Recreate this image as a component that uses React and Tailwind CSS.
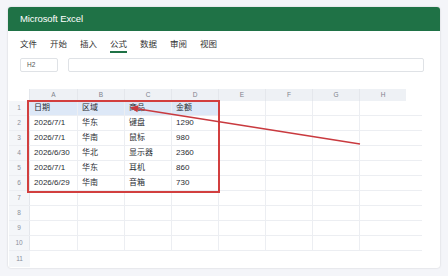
import React from "react";

const cols = ["A", "B", "C", "D", "E", "F", "G", "H"];
const data = [
  ["日期", "区域", "商品", "金额"],
  ["2026/7/1", "华东", "键盘", "1290"],
  ["2026/7/1", "华南", "鼠标", "980"],
  ["2026/6/30", "华北", "显示器", "2360"],
  ["2026/7/1", "华东", "耳机", "860"],
  ["2026/6/29", "华南", "音箱", "730"],
];
const menu = ["文件", "开始", "插入", "公式", "数据", "审阅", "视图"];
const font = { fontFamily: '"Liberation Sans", "Noto Sans CJK SC", sans-serif' };

export default function App() {
  const rows = [];
  for (let r = 1; r <= 10; r++) {
    const d = data[r - 1] || [];
    rows.push(
      <div key={r} className={`flex h-[15px] border-b border-[#eceef2] ${r === 1 ? "" : ""}`}>
        <div className="w-[21px] shrink-0 border-r border-[#e4e7ec] bg-[#f4f6f9] flex items-center justify-center text-[6.5px] text-[#8a8f99]">{r}</div>
        {cols.map((c, i) => (
          <div
            key={c}
            className={`w-[47px] shrink-0 flex items-center pl-[4px] text-[8px] text-[#2a2d33] ${i > 0 ? "border-l border-[#eceef2]" : ""} ${r === 1 && i < 4 ? "bg-[#dde8f7]" : ""}`}
          >
            {d[i] || ""}
          </div>
        ))}
      </div>
    );
  }
  return (
    <div className="relative w-[448px] h-[276px] bg-[#f4f5f9] overflow-hidden" style={font}>
      <div className="absolute left-[8px] top-[7px] w-[432px] h-[261px] bg-white rounded-[3px] shadow-[0_0_2px_rgba(0,0,0,0.18)] overflow-hidden flex flex-col">
        <div className="h-[24px] bg-[#1f7246] flex items-center pl-[12px] text-white text-[9.5px] tracking-[-0.1px]">Microsoft Excel</div>
        <div className="flex items-start gap-[13px] pl-[12px] mt-[7px] h-[16px] text-[8.5px] text-[#333]">
          {menu.map((m) => (
            <div key={m} className="flex flex-col items-center">
              <span className="leading-[12px]">{m}</span>
              {m === "公式" && <span className="w-full h-[1.5px] bg-[#1f7246] mt-[1px]" />}
            </div>
          ))}
        </div>
        <div className="flex items-center gap-[10px] pl-[12px] mt-[4px]">
          <div className="w-[38px] h-[14px] border border-[#dfe2e6] rounded-[2px] flex items-center pl-[6px] text-[6.5px] text-[#555]">H2</div>
          <div className="w-[356px] h-[14px] border border-[#dfe2e6] rounded-[2px]" />
        </div>
        <div className="ml-[1px] mt-[17px] w-[413px]">
          <div className="flex h-[12px]">
            <div className="w-[21px] shrink-0 border-r border-[#e4e7ec]" />
            {cols.map((c, i) => (
              <div key={c} className={`w-[47px] shrink-0 bg-[#eef1f5] flex items-center justify-center text-[6.5px] text-[#7d828c] ${i > 0 ? "border-l border-[#e4e7ec]" : ""}`}>{c}</div>
            ))}
          </div>
          {rows}
          <div className="flex h-[16px]">
            <div className="w-[21px] shrink-0 bg-[#f4f6f9] flex items-center justify-center text-[6.5px] text-[#8a8f99]">11</div>
          </div>
        </div>
      </div>
      <div className="absolute left-[27px] top-[100px] w-[193px] h-[93px] border-2 border-[#d23f3f]" />
      <svg className="absolute left-0 top-0 pointer-events-none" width="448" height="276">
        <line x1="360" y1="144" x2="137" y2="108.7" stroke="#c93a3f" strokeWidth="1.6" />
        <polygon points="130,107.5 138.5,105.2 137.4,112.2" fill="#c93a3f" />
      </svg>
    </div>
  );
}
